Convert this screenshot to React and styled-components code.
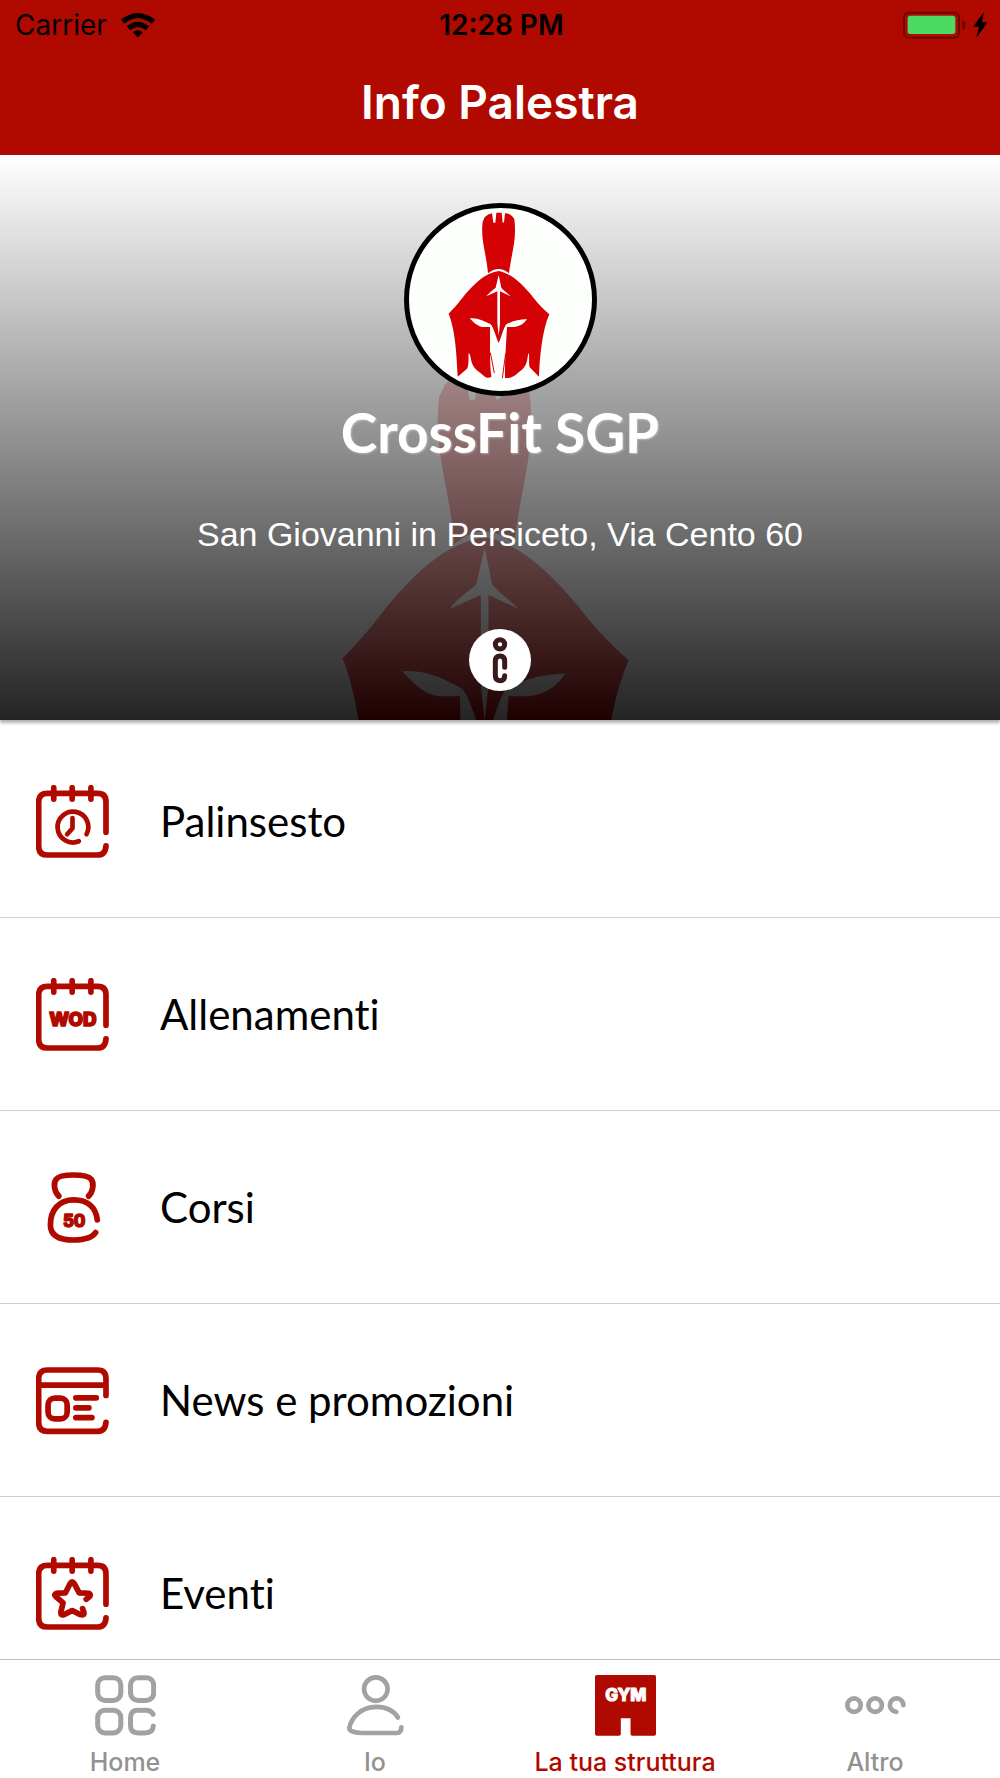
import React from "react";
import styled, { createGlobalStyle } from "styled-components";

const red = "#b00a00";
const uiFont = `Inter, "Liberation Sans", sans-serif`;
const roundFont = `Lato, "Open Sans", sans-serif`;

const GlobalStyle = createGlobalStyle`
  * { box-sizing: border-box; }
  body { margin: 0; background: #fff; }
`;

const Screen = styled.div`
  display: flex;
  flex-direction: column;
  height: 100vh;
  overflow: hidden;
  background: #fff;
  color: #000;
  font-family: ${roundFont};
  font-variant-ligatures: none;
`;

const Header = styled.header`
  flex: none;
  background: ${red};
`;

const StatusBar = styled.div`
  display: grid;
  grid-template-columns: 1fr auto 1fr;
  align-items: center;
  height: 50px;
  padding: 0 12px 0 15px;
  font: 400 28px/32px ${uiFont};
`;

const StatusGroup = styled.div`
  display: flex;
  align-items: center;
  justify-content: ${(p) => p.$align || "flex-start"};
  gap: ${(p) => p.$gap}px;
`;

const Clock = styled.time`
  font-weight: 600;
`;

const Title = styled.h1`
  margin: 0;
  padding: 24px 0 25px;
  color: #fff;
  text-align: center;
  font: 600 46px/56px ${uiFont};
`;

const Main = styled.main`
  flex: 1;
  min-height: 0;
  overflow-y: auto;
  scrollbar-width: none;
`;

const Hero = styled.section`
  position: relative;
  display: flex;
  flex-direction: column;
  align-items: center;
  padding: 48px 24px 29px;
  color: #fff;
  background: #fff;
  box-shadow: 0 3px 3px rgba(0, 0, 0, 0.3);
`;

const Backdrop = styled.svg`
  position: absolute;
  inset: 0;
  width: 100%;
  height: 100%;
`;

const Shade = styled.div`
  position: absolute;
  inset: 0;
  background: linear-gradient(rgba(255, 255, 255, 0.85), rgba(0, 0, 0, 0.86));
`;

const Avatar = styled.div`
  position: relative;
  width: 193px;
  height: 193px;
  border: 5px solid #000;
  border-radius: 50%;
  overflow: hidden;
  background: #fdfffd;

  svg { display: block; width: 100%; height: 100%; }
`;

const GymName = styled.h2`
  position: relative;
  margin: 4px 0 0;
  font: 700 55px/64px ${roundFont};
  text-shadow: 1px 1px 2px rgba(255, 255, 255, 0.4);
`;

const Address = styled.p`
  position: relative;
  margin: 50px 0 0;
  font: 400 34px/40px "Liberation Sans", Arial, sans-serif;
`;

const InfoButton = styled.button`
  position: relative;
  width: 62px;
  height: 62px;
  margin: 75px 0 0;
  padding: 0;
  border: 0;
  border-radius: 50%;
  background: #fff;
  color: #3a1a1b;
  cursor: pointer;

  svg { display: block; width: 100%; height: 100%; }
`;

const Menu = styled.ul`
  margin: 5px 0 0;
  padding: 0;
  list-style: none;
`;

const MenuItem = styled.li`
  height: 193px;
  border-bottom: 1px solid #d0d0d0;
`;

const MenuLink = styled.a`
  display: flex;
  align-items: center;
  gap: 51px;
  height: 100%;
  padding: 0 36px;
  color: #000;
  font-size: 42px;
  line-height: 52px;
  text-decoration: none;

  svg { flex: none; width: 73px; height: 73px; color: ${red}; }
`;

const TabBar = styled.nav`
  flex: none;
  display: grid;
  grid-template-columns: repeat(4, 1fr);
  height: 119px;
  border-top: 1px solid #bfbfbf;
  background: #fff;
`;

const Tab = styled.a`
  display: flex;
  flex-direction: column;
  align-items: center;
  gap: 12px;
  padding-top: 15px;
  color: ${(p) => (p.$active ? red : "#929292")};
  font: 500 25px/28px ${uiFont};
  text-decoration: none;

  svg { width: 61px; height: 61px; color: ${(p) => (p.$active ? red : "#a2a2a2")}; }
`;

const line = (width) => ({
  fill: "none",
  stroke: "currentColor",
  strokeWidth: width,
  strokeLinecap: "round",
  strokeLinejoin: "round",
});

function Helmet() {
  return (
    <>
      <path fill="#d40205" d="M295 250C290 190 272 150 279 95L285 82Q295 71 307 70L311 98H317L320 68H336L339 98L343 97L346 70Q365 70 374 88C382 150 365 190 358 250Q327 224 295 250Z" />
      <path fill="#d40205" d="M327 243C285 250 255 280 225 315C208 337 196 352 177 371C192 410 200 460 204 560L232 536C238 530 236 505 237 490C242 488 243 510 248 522C256 540 268 544 282 557C290 565 300 564 305 560C299 510 302 470 301 411H278C260 408 250 395 240 385C262 382 285 393 303 403C312 412 318 440 327 459C336 440 342 412 350 403C370 392 390 388 412 387C402 402 392 408 375 411H352C350 450 345 520 346 564C370 566 380 552 392 543C412 530 412 510 416 490C421 490 416 520 420 532L448 560C450 500 458 420 479 373C455 352 440 335 425 315C395 280 365 250 327 243Z" />
      <path fill="#fff" d="M327 255L318 293C308 302 298 308 290 319L323 304V400L327 437L331 400V304L363 319C352 308 342 302 335 293Z" />
      <path fill="none" stroke="#d40205" strokeWidth="3" d="M302 488L314 549M348 490L338 565" />
    </>
  );
}

function WifiIcon() {
  return (
    <svg width="34" height="24" viewBox="363 36 102 72" aria-hidden="true">
      <path d="M363 56Q413 16 465 56L455 68Q413 35 373 68ZM380 76Q413 48 448 76L437 88Q413 68 391 88ZM399 94Q413 81 429 94L413 109Z" />
    </svg>
  );
}

function BatteryIcon() {
  return (
    <svg width="63" height="28" viewBox="1210 31 189 84" role="img" aria-label="Batteria in carica">
      <rect x="1213" y="36" width="165" height="75" rx="15" fill="none" stroke="#6c0700" strokeWidth="6" />
      <rect x="1224" y="45" width="143" height="55" rx="8" fill="#4cd964" />
      <path d="M1388 57Q1398 62 1398 73Q1398 84 1388 88Z" fill="#6c0700" />
    </svg>
  );
}

function BoltIcon() {
  return (
    <svg width="15" height="26" viewBox="1420 36 45 78" aria-hidden="true">
      <path d="M1453 36L1420 80H1438L1430 113L1464 67H1447Z" />
    </svg>
  );
}

function Calendar({ children }) {
  return (
    <svg viewBox="49 40 218 218" aria-hidden="true" {...line(17)}>
      <path d="M258 181V90Q258 65 233 65H83Q57 65 57 90V223Q57 249 83 249H233Q256 249 258 222M102 48V82M157 48V82M213 48V82" />
      {children}
    </svg>
  );
}

function IconText({ x, y, size, width, color = "currentColor", children }) {
  return (
    <text x={x} y={y} fontSize={size} fontWeight="800" fontFamily="Inter, sans-serif" textAnchor="middle" fill={color} stroke={color} strokeWidth={width}>
      {children}
    </text>
  );
}

const ScheduleIcon = () => (
  <Calendar>
    <path strokeWidth="14" d="M200 187A46 46 0 1 0 177 208M158 139V169L142 187" />
  </Calendar>
);

const WorkoutIcon = () => (
  <Calendar>
    <IconText x={159} y={184} size={56} width={5}>WOD</IconText>
  </Calendar>
);

const EventIcon = () => (
  <Calendar>
    <path d="M199 166L210 157Q214 148 200 148L178 147L163 119Q157 110 151 119L137 147L115 148Q100 150 108 158L130 177L123 205Q122 216 133 212L157 200L181 212Q194 216 192 205L188 194" />
  </Calendar>
);

const KettlebellIcon = () => (
  <svg viewBox="49 34 218 218" aria-hidden="true" {...line(17)}>
    <path d="M117 109C104 96 99 70 110 58C122 42 200 42 213 58C224 70 219 96 206 109M232 180C228 145 205 120 162 120C118 120 92 150 92 195C92 228 122 240 162 240C195 240 215 235 227 218" />
    <IconText x={163} y={201} size={50} width={4}>50</IconText>
  </svg>
);

const NewsIcon = () => (
  <svg viewBox="49 46 218 218" aria-hidden="true" {...line(17)}>
    <path d="M258 140V90Q258 64 233 64H83Q57 64 57 90V221Q57 247 83 247H233Q256 247 258 220M57 109H258M168 147H229M168 177H207M168 206H216" />
    <rect x="85" y="148" width="57" height="62" rx="20" />
  </svg>
);

const HomeIcon = () => (
  <svg viewBox="285 75 182 182" aria-hidden="true" {...line(15)}>
    <rect x="293" y="83" width="69" height="68" rx="22" />
    <rect x="391" y="83" width="69" height="68" rx="22" />
    <rect x="293" y="180" width="69" height="68" rx="22" />
    <path d="M458 192Q452 180 436 180H413Q391 180 391 202V226Q391 248 413 248H434Q458 248 459 227" />
  </svg>
);

const PersonIcon = () => (
  <svg viewBox="1034 75 182 182" aria-hidden="true" {...line(14)}>
    <circle cx="1126" cy="117" r="35" />
    <path d="M1192 202C1180 182 1160 170 1127 170C1080 170 1052 205 1047 233C1046 244 1068 248 1085 248H1188Q1202 248 1202 231" />
  </svg>
);

const GymIcon = () => (
  <svg viewBox="285 75 182 182" aria-hidden="true" strokeLinejoin="round">
    <path fill="currentColor" d="M290 75H462Q467 75 467 80V251Q467 256 462 256H396Q391 256 391 251V204H362V251Q362 256 357 256H290Q285 256 285 251V80Q285 75 290 75Z" />
    <IconText x={377} y={152} size={51} width={3} color="#fff">GYM</IconText>
  </svg>
);

const MoreIcon = () => (
  <svg viewBox="1034 75 182 182" aria-hidden="true" {...line(14)}>
    <circle cx="1061" cy="165" r="20" />
    <circle cx="1124" cy="165" r="20" />
    <path d="M1208 165A20 20 0 1 0 1187 185" />
  </svg>
);

const menu = [
  { label: "Palinsesto", href: "#palinsesto", Icon: ScheduleIcon },
  { label: "Allenamenti", href: "#allenamenti", Icon: WorkoutIcon },
  { label: "Corsi", href: "#corsi", Icon: KettlebellIcon },
  { label: "News e promozioni", href: "#news", Icon: NewsIcon },
  { label: "Eventi", href: "#eventi", Icon: EventIcon },
];

const tabs = [
  { label: "Home", href: "#home", Icon: HomeIcon },
  { label: "Io", href: "#io", Icon: PersonIcon },
  { label: "La tua struttura", href: "#struttura", Icon: GymIcon, active: true },
  { label: "Altro", href: "#altro", Icon: MoreIcon },
];

export default function App() {
  return (
    <Screen>
      <GlobalStyle />
      <Header>
        <StatusBar>
          <StatusGroup $gap={14}>
            <span>Carrier</span>
            <WifiIcon />
          </StatusGroup>
          <Clock>12:28 PM</Clock>
          <StatusGroup $gap={7} $align="flex-end">
            <BatteryIcon />
            <BoltIcon />
          </StatusGroup>
        </StatusBar>
        <Title>Info Palestra</Title>
      </Header>

      <Main>
        <Hero>
          <Backdrop viewBox="0 0 1000 565" preserveAspectRatio="xMidYMin slice" aria-hidden="true">
            <g transform="translate(175 152) scale(0.947)">
              <Helmet />
            </g>
          </Backdrop>
          <Shade />
          <Avatar>
            <svg viewBox="58 54 549 549" role="img" aria-label="Logo CrossFit SGP">
              <Helmet />
            </svg>
          </Avatar>
          <GymName>CrossFit SGP</GymName>
          <Address>San Giovanni in Persiceto, Via Cento 60</Address>
          <InfoButton type="button" aria-label="Informazioni">
            <svg viewBox="507 745 186 186" {...line(15)}>
              <circle cx="600" cy="791" r="14" />
              <path d="M614 860V841Q614 826 600 826Q586 826 586 841V884Q586 900 600 900Q614 900 614 885" />
            </svg>
          </InfoButton>
        </Hero>

        <Menu>
          {menu.map(({ label, href, Icon }) => (
            <MenuItem key={label}>
              <MenuLink href={href}>
                <Icon />
                {label}
              </MenuLink>
            </MenuItem>
          ))}
        </Menu>
      </Main>

      <TabBar>
        {tabs.map(({ label, href, Icon, active }) => (
          <Tab key={label} href={href} $active={active} aria-current={active ? "page" : undefined}>
            <Icon />
            {label}
          </Tab>
        ))}
      </TabBar>
    </Screen>
  );
}
